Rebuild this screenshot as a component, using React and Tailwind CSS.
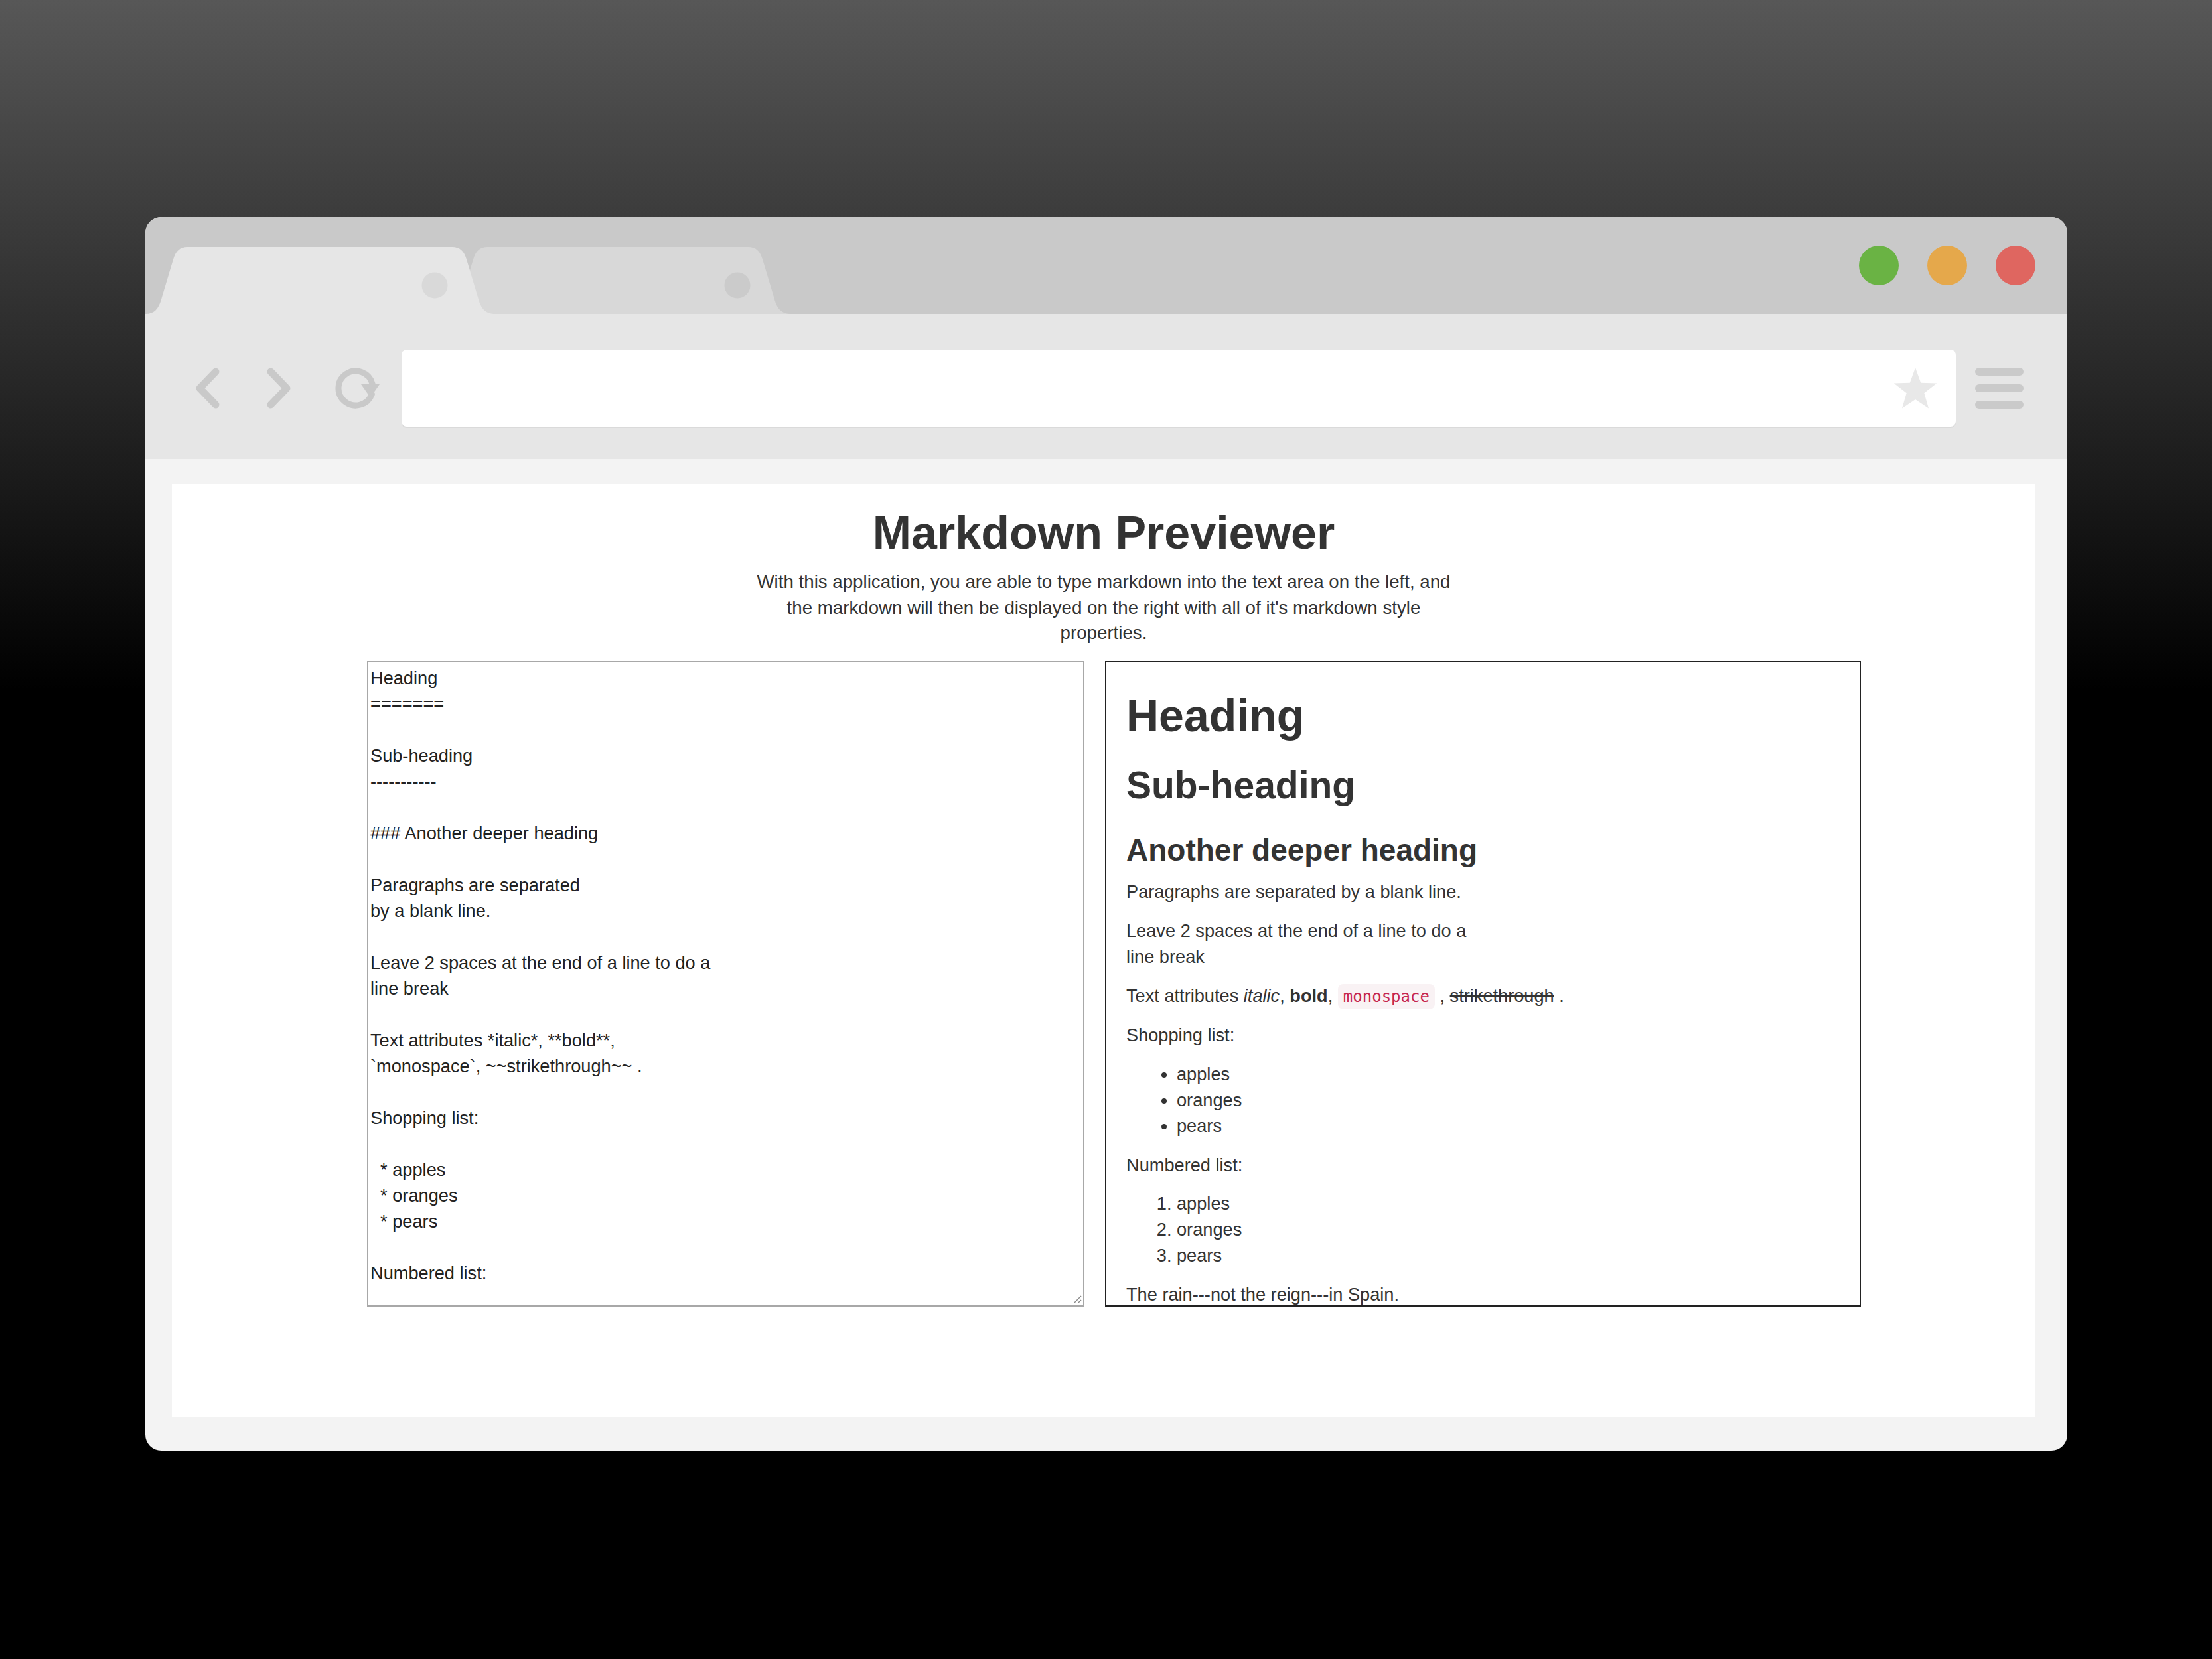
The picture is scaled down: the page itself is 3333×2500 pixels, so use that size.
import React from "react";

const SOURCE = `Heading
=======

Sub-heading
-----------

### Another deeper heading

Paragraphs are separated
by a blank line.

Leave 2 spaces at the end of a line to do a
line break

Text attributes *italic*, **bold**,
\`monospace\`, ~~strikethrough~~ .

Shopping list:

  * apples
  * oranges
  * pears

Numbered list:`;

function Tabs() {
  return (
    <svg className="absolute left-0 top-0" width="1000" height="146" viewBox="0 0 1000 146">
      <path
        d="M 450 146 C 466 146 472 138 476 124 L 494 64 C 498 51 504 45 516 45 L 908 45 C 920 45 926 51 930 64 L 948 124 C 952 138 958 146 974 146 Z"
        fill="#d8d8d8"
      />
      <circle cx="892" cy="103" r="19.5" fill="#cbcbcb" />
      <path
        d="M 0 146 C 14 146 20 138 24 124 L 42 64 C 46 51 52 45 64 45 L 462 45 C 474 45 480 51 484 64 L 502 124 C 506 138 512 146 528 146 Z"
        fill="#e6e6e6"
      />
      <circle cx="436" cy="103" r="19.5" fill="#d9d9d9" />
    </svg>
  );
}

function Toolbar() {
  return (
    <div className="h-[219px] bg-[#e6e6e6] flex items-center pl-[74px] pr-[66px] pt-[5px]">
      <svg width="38" height="62" viewBox="0 0 38 62" className="shrink-0">
        <polyline points="32,6 8,31 32,56" fill="none" stroke="#c9c9c9" strokeWidth="11" strokeLinecap="round" strokeLinejoin="round" />
      </svg>
      <svg width="38" height="62" viewBox="0 0 38 62" className="shrink-0 ml-[71px]">
        <polyline points="6,6 30,31 6,56" fill="none" stroke="#c9c9c9" strokeWidth="11" strokeLinecap="round" strokeLinejoin="round" />
      </svg>
      <svg width="70" height="62" viewBox="0 0 70 62" className="shrink-0 ml-[63px]">
        <path d="M 57.4 39.9 A 26 26 0 1 1 58.1 24.3" fill="none" stroke="#c9c9c9" strokeWidth="9" strokeLinecap="round" />
        <polygon points="41,25 69,25 55,45" fill="#c9c9c9" />
      </svg>
      <div className="ml-[32px] flex-1 h-[116px] bg-white rounded-[8px] shadow-[0_2px_0_#dadada] flex items-center justify-end pr-[27px]">
        <svg width="68" height="65" viewBox="0 0 68 65">
          <polygon
            points="34,1 42.2,23.7 66.3,24.5 47.3,39.3 54,62.5 34,49 14,62.5 20.7,39.3 1.7,24.5 25.8,23.7"
            fill="#e8e8e8"
          />
        </svg>
      </div>
      <div className="ml-[29px] w-[73px] flex flex-col gap-[13px]">
        <span className="block h-[12px] rounded-full bg-[#cacaca]" />
        <span className="block h-[12px] rounded-full bg-[#cacaca]" />
        <span className="block h-[12px] rounded-full bg-[#cacaca]" />
      </div>
    </div>
  );
}

function Preview() {
  return (
    <div className="w-[1139px] h-[973px] shrink-0 border-2 border-[#222] overflow-hidden px-[30px] text-[#333] text-[27.2px] leading-[38.8px]">
      <h1 className="mt-[42px] text-[68px] leading-[76px] font-bold">Heading</h1>
      <h2 className="mt-[36px] text-[57px] leading-[63px] font-bold">Sub-heading</h2>
      <h3 className="mt-[41px] text-[46px] leading-[51px] font-bold">Another deeper heading</h3>
      <p className="mt-[18.5px]">Paragraphs are separated by a blank line.</p>
      <p className="mt-[20px]">
        Leave 2 spaces at the end of a line to do a<br />line break
      </p>
      <p className="mt-[20px]">
        Text attributes <em className="italic">italic</em>, <strong className="font-bold">bold</strong>,{" "}
        <code className="font-['DejaVu_Sans_Mono',monospace] text-[24px] text-[#c7254e] bg-[#f9f2f4] rounded-[8px] px-[8px] py-[5px]">
          monospace
        </code>{" "}
        , <del className="line-through">strikethrough</del> .
      </p>
      <p className="mt-[20px]">Shopping list:</p>
      <ul className="mt-[20px] list-disc pl-[76px]">
        <li>apples</li>
        <li>oranges</li>
        <li>pears</li>
      </ul>
      <p className="mt-[20px]">Numbered list:</p>
      <ol className="mt-[20px] list-decimal pl-[76px]">
        <li>apples</li>
        <li>oranges</li>
        <li>pears</li>
      </ol>
      <p className="mt-[20px]">The rain---not the reign---in Spain.</p>
    </div>
  );
}

function Editor() {
  return (
    <div className="relative w-[1081px] h-[973px] shrink-0 border-2 border-[#a8a8a8] bg-white overflow-hidden">
      <div className="pl-[3px] pt-[4px] whitespace-pre text-[27.2px] leading-[39px] text-[#222]">{SOURCE}</div>
      <svg className="absolute right-[2px] bottom-[2px]" width="16" height="16" viewBox="0 0 16 16">
        <line x1="15" y1="4" x2="4" y2="15" stroke="#8a8a8a" strokeWidth="1.5" />
        <line x1="15" y1="10" x2="10" y2="15" stroke="#8a8a8a" strokeWidth="1.5" />
      </svg>
    </div>
  );
}

export default function App() {
  return (
    <div className="w-[3333px] h-[2500px] bg-[linear-gradient(to_bottom,#575757_0px,#000000_1040px)] pt-[327px] pl-[219px] font-['Liberation_Sans',Arial,sans-serif]">
      <div className="w-[2896px] h-[1859px] rounded-[24px] overflow-hidden flex flex-col bg-[#f3f3f3]">
        <div className="relative h-[146px] shrink-0 bg-[#c9c9c9] flex items-center justify-end pr-[48px] gap-[43px]">
          <Tabs />
          <span className="relative block w-[60px] h-[60px] rounded-full bg-[#6ab344]" />
          <span className="relative block w-[60px] h-[60px] rounded-full bg-[#e5a84b]" />
          <span className="relative block w-[60px] h-[60px] rounded-full bg-[#df6660]" />
        </div>
        <Toolbar />
        <div className="flex-1 pl-[40px] pr-[48px] pt-[37px] pb-[51px]">
          <div className="bg-white h-full pt-[36px] text-[#333]">
            <h1 className="text-center text-[70px] leading-[77px] font-bold">Markdown Previewer</h1>
            <p className="mt-[16px] text-center text-[27.7px] leading-[38.6px] whitespace-nowrap">
              With this application, you are able to type markdown into the text area on the left, and
              <br />
              the markdown will then be displayed on the right with all of it's markdown style
              <br />
              properties.
            </p>
            <div className="mt-[22px] flex pl-[294px] gap-[31px]">
              <Editor />
              <Preview />
            </div>
          </div>
        </div>
      </div>
    </div>
  );
}
